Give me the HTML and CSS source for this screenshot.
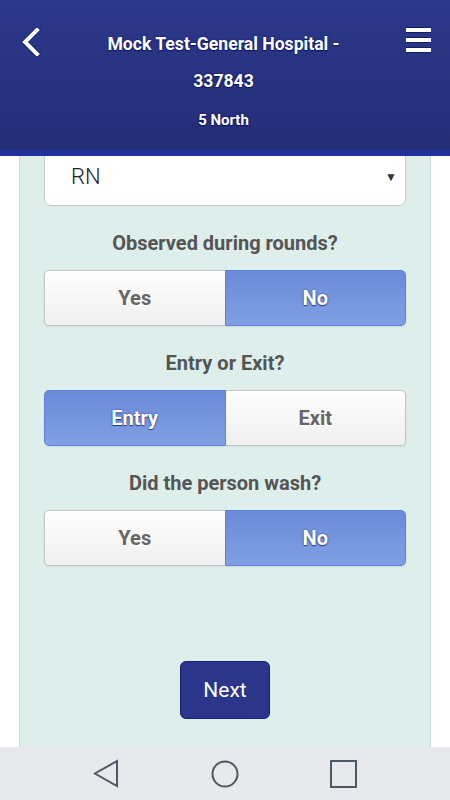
FILE: index.html
```html
<!DOCTYPE html>
<html lang="en">
<head>
    <meta charset="UTF-8">
    <meta name="viewport" content="width=device-width, initial-scale=1.0">
    <title>Hand Hygiene Observation</title>
    <link rel="stylesheet" href="styles.css">
</head>
<body>
<div class="screen">
    <header class="topbar">
        <button class="back" aria-label="Back">
            <svg width="20" height="28" viewBox="0 0 20 28">
                <path d="M16 2 L4 14 L16 26" fill="none" stroke="#1b2470" stroke-width="6" stroke-linecap="square"/>
                <path d="M16 2 L4 14 L16 26" fill="none" stroke="#fff" stroke-width="4" stroke-linecap="square"/>
            </svg>
        </button>
        <div class="titles">
            <h1>Mock Test-General Hospital -<br>337843</h1>
            <p>5 North</p>
        </div>
        <button class="menu" aria-label="Menu">
            <span></span><span></span><span></span>
        </button>
    </header>

    <main class="content">
        <div class="panel">
            <div class="select">
                <span>RN</span>
                <span class="caret">&#9660;</span>
            </div>

            <p class="question">Observed during rounds?</p>
            <div class="toggle">
                <button>Yes</button>
                <button class="active">No</button>
            </div>

            <p class="question">Entry or Exit?</p>
            <div class="toggle">
                <button class="active">Entry</button>
                <button>Exit</button>
            </div>

            <p class="question">Did the person wash?</p>
            <div class="toggle">
                <button>Yes</button>
                <button class="active">No</button>
            </div>

            <div class="actions">
                <button class="next">Next</button>
            </div>
        </div>
    </main>

    <nav class="navbar">
        <span class="nav-key">
            <svg width="26" height="30" viewBox="0 0 26 30">
                <path d="M24 2 L2 14.5 L24 27 Z" fill="none" stroke="#4c5864" stroke-width="2" stroke-linejoin="miter"/>
            </svg>
        </span>
        <span class="nav-key">
            <svg width="28" height="28" viewBox="0 0 28 28">
                <circle cx="14" cy="14" r="12.5" fill="none" stroke="#4c5864" stroke-width="2"/>
            </svg>
        </span>
        <span class="nav-key">
            <svg width="28" height="28" viewBox="0 0 28 28">
                <rect x="1" y="1" width="25" height="26" fill="none" stroke="#4c5864" stroke-width="2"/>
            </svg>
        </span>
    </nav>
</div>
</body>
</html>
```

FILE: styles.css
```css
/* base */
html, body {
    margin: 0;
    padding: 0;
}

body {
    font-family: Roboto, "Liberation Sans", Arial, sans-serif;
    background-color: #fff;
}

button {
    font-family: inherit;
    cursor: pointer;
}

.screen {
    display: flex;
    flex-direction: column;
    width: 450px;
    height: 800px;
    overflow: hidden;
}

/* header */
.topbar {
    display: flex;
    align-items: flex-start;
    height: 150px;
    flex-shrink: 0;
    background: linear-gradient(#2c388b, #242d76);
    border-bottom: 6px solid #22309b;
    color: #fff;
    position: relative;
    z-index: 1;
}

.back {
    background: none;
    border: none;
    padding: 0;
    margin: 28px 0 0 21px;
    width: 20px;
    height: 28px;
}

.titles {
    flex: 1;
    text-align: center;
    padding-top: 26px;
}

.titles h1 {
    margin: 0;
    font-size: 17.6px;
    font-weight: bold;
    line-height: 37px;
    text-shadow: 0 0 2px #0d1560, 0 1px 1px #0d1560;
}

.titles p {
    margin: 10px 0 0;
    font-size: 15px;
    font-weight: bold;
    line-height: 20px;
    text-shadow: 0 0 2px #0d1560, 0 1px 1px #0d1560;
}

.menu {
    background: none;
    border: none;
    padding: 0;
    margin: 27px 19px 0 0;
    width: 25px;
    display: flex;
    flex-direction: column;
    gap: 4px;
}

.menu span {
    display: block;
    height: 4px;
    background-color: #fff;
    border: 1px solid #141c66;
    border-left: none;
    border-right: none;
}

/* content */
.content {
    flex: 1;
    display: flex;
    min-height: 0;
}

.panel {
    flex: 1;
    margin: 0 19px;
    padding: 0 24px;
    background-color: #deeeeb;
    border-left: 1px solid #cfd6d5;
    border-right: 1px solid #cfd6d5;
    overflow: hidden;
}

.select {
    display: flex;
    justify-content: space-between;
    align-items: center;
    height: 60px;
    margin-top: -10px;
    padding: 0 8px 0 26px;
    background-color: #fff;
    border: 1px solid #c9cccc;
    border-radius: 7px;
    font-size: 22px;
    font-weight: 300;
    color: #222;
    box-sizing: border-box;
}

.select .caret {
    font-size: 12px;
    color: #333;
    padding-top: 2px;
}

.question {
    margin: 26px 0 15px;
    text-align: center;
    font-size: 20px;
    font-weight: bold;
    line-height: 23px;
    color: #555;
}

.toggle {
    display: flex;
    height: 56px;
    border-radius: 5px;
    box-shadow: 0 1px 2px rgba(0, 0, 0, 0.08);
}

.toggle button {
    flex: 1;
    margin: 0;
    font-size: 20px;
    font-weight: bold;
    color: #666;
    text-shadow: 0 1px 0 #fff;
    background: linear-gradient(#fefefe, #efefef);
    border: 1px solid #c4c4c4;
}

.toggle button:first-child {
    border-radius: 5px 0 0 5px;
    border-right: none;
}

.toggle button:last-child {
    border-radius: 0 5px 5px 0;
    border-left: none;
}

.toggle button.active {
    color: #fff;
    text-shadow: 0 0 2px #2a3f80, 0 1px 1px #2a3f80;
    background: linear-gradient(#6a8ada, #80a0e3);
    border: 1px solid #5b82e0;
}

.actions {
    display: flex;
    justify-content: center;
    margin-top: 95px;
}

.next {
    width: 90px;
    height: 58px;
    font-size: 21px;
    color: #fff;
    background-color: #2b3589;
    border: 1px solid #14207a;
    border-radius: 6px;
}

/* android nav */
.navbar {
    display: flex;
    justify-content: center;
    align-items: center;
    gap: 79px;
    height: 53px;
    flex-shrink: 0;
    background-color: #e8e9ec;
}

.nav-key {
    display: flex;
    justify-content: center;
    width: 40px;
}
```
